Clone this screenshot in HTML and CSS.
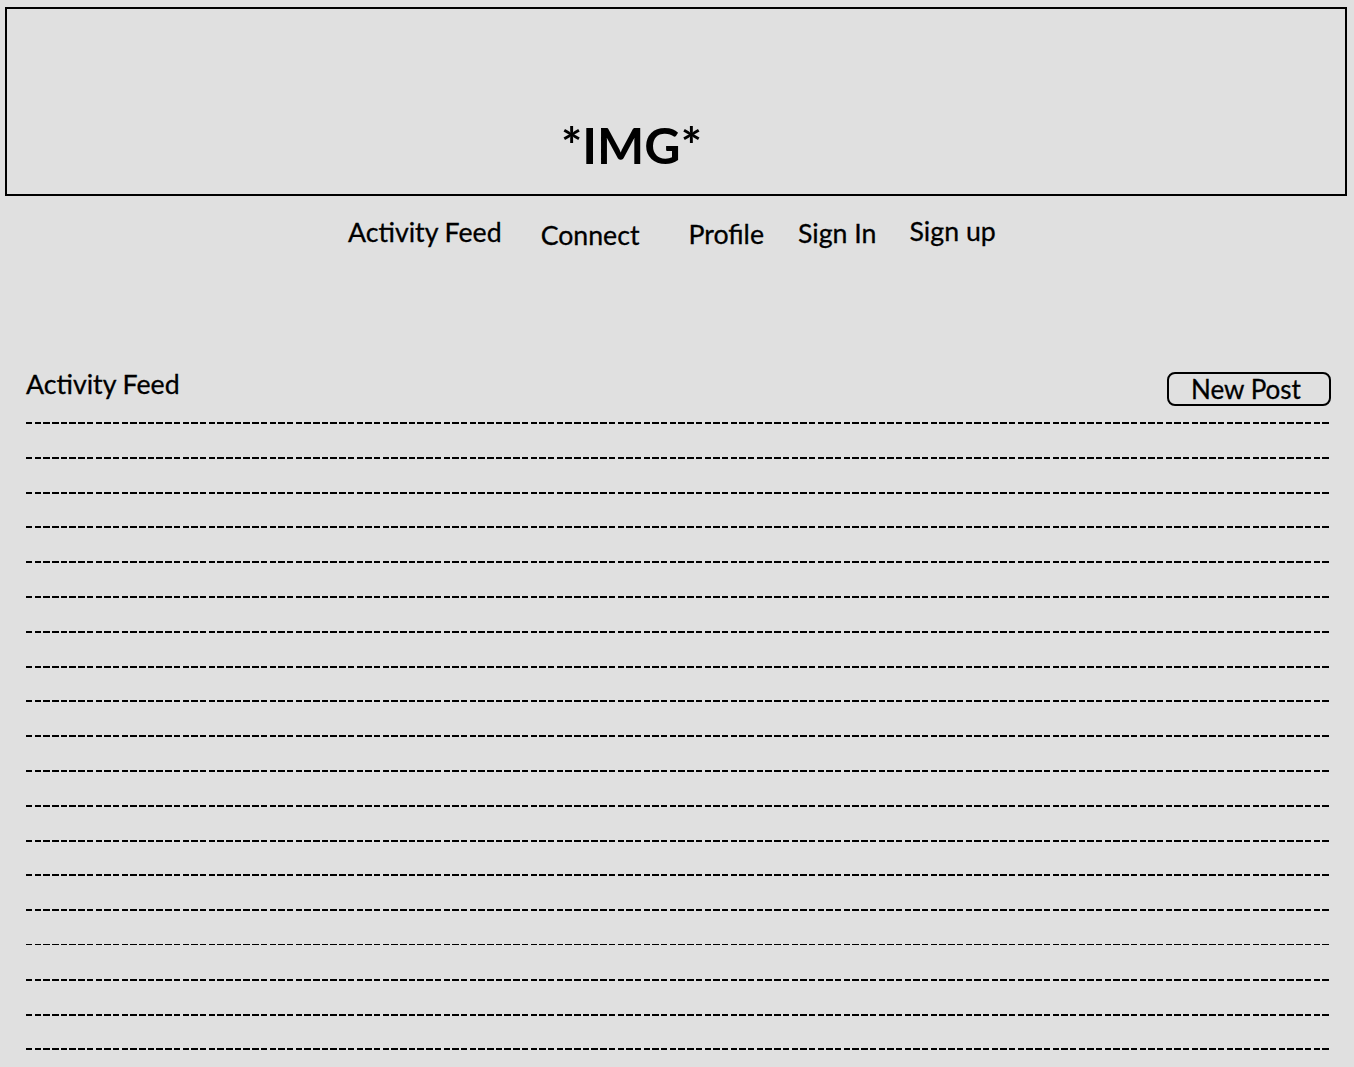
FILE: index.html
```html
<!DOCTYPE html>
<html lang="en">
<head>
<meta charset="utf-8">
<title>Activity Feed</title>
<link rel="stylesheet" href="styles.css">
</head>
<body>
<header class="banner"><span class="banner-text">*IMG*</span></header>
<nav class="nav">
  <a class="nav-item nav-feed">Activity Feed</a>
  <a class="nav-item nav-connect">Connect</a>
  <a class="nav-item nav-profile">Profile</a>
  <a class="nav-item nav-signin">Sign In</a>
  <a class="nav-item nav-signup">Sign up</a>
</nav>
<main class="feed">
  <div class="feed-head">
    <h1 class="feed-title">Activity Feed</h1>
    <button class="new-post">New Post</button>
  </div>
  <div class="feed-lines">
    <div class="line"></div><div class="line"></div><div class="line"></div><div class="line"></div>
    <div class="line"></div><div class="line"></div><div class="line"></div><div class="line"></div>
    <div class="line"></div><div class="line"></div><div class="line"></div><div class="line"></div>
    <div class="line"></div><div class="line"></div><div class="line"></div><div class="line thin"></div>
    <div class="line"></div><div class="line"></div><div class="line"></div>
  </div>
</main>
</body>
</html>
```
FILE: styles.css
```css
html, body {
  margin: 0;
  padding: 0;
  background: #e0e0e0;
  color: #000;
  font-family: Lato, "Open Sans", sans-serif;
}
body {
  width: 1354px;
  height: 1067px;
  overflow: hidden;
}
.banner {
  box-sizing: border-box;
  margin: 7px 7px 0 5px;
  height: 189px;
  border: 2px solid #000;
  display: flex;
  align-items: flex-end;
  padding: 0 0 24px 554px;
}
.banner-text {
  font-size: 50px;
  font-weight: 700;
  line-height: 1;
}
.nav {
  display: flex;
  padding: 21px 0 0 348px;
  height: 39px;
  font-size: 26.7px;
  line-height: 30px;
  -webkit-text-stroke: 0.3px #000;
}
.nav-item {
  display: block;
}
.nav-connect { margin-left: 39px; margin-top: 3px; }
.nav-profile { margin-left: 49px; margin-top: 2px; }
.nav-signin { margin-left: 34px; margin-top: 1px; }
.nav-signup { margin-left: 33px; margin-top: -1px; }
.feed {
  padding: 113px 23px 0 26px;
}
.feed-head {
  display: flex;
  justify-content: space-between;
  align-items: flex-start;
  height: 53px;
}
.feed-title {
  margin: 0;
  font-size: 26.7px;
  font-weight: 400;
  line-height: 30px;
  -webkit-text-stroke: 0.3px #000;
}
.new-post {
  box-sizing: border-box;
  margin: 3px 0 0 0;
  width: 164px;
  height: 34px;
  border: 2px solid #000;
  border-radius: 8px;
  background: transparent;
  font-family: inherit;
  font-size: 26px;
  line-height: 28px;
  padding: 0 6px 0 0;
  color: #000;
  -webkit-text-stroke: 0.3px #000;
}
.feed-lines {
  display: flex;
  flex-direction: column;
  gap: 32.8px;
  width: 1303px;
}
.line {
  height: 2px;
  background: repeating-linear-gradient(90deg, #000 0, #000 6.4px, transparent 6.4px, transparent 8.7px);
}
.line.thin {
  height: 1px;
  margin-bottom: 1px;
}
```
